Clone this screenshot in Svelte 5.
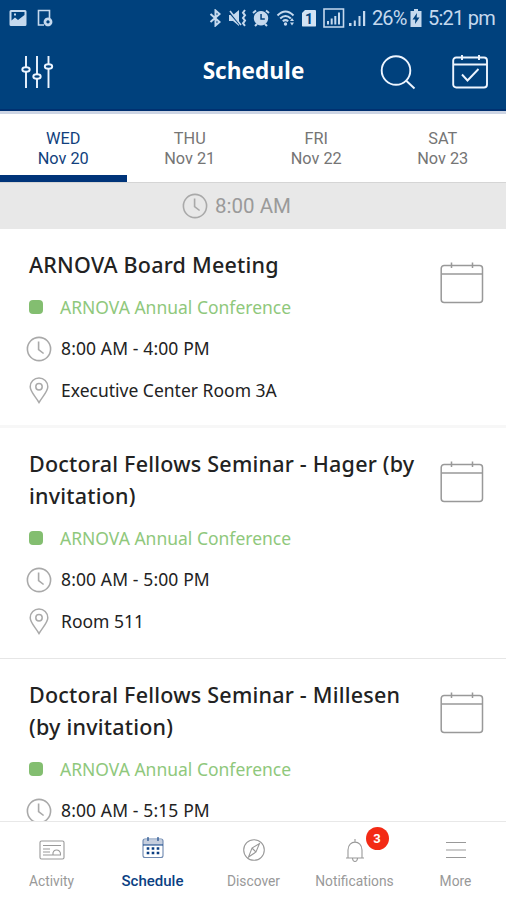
<script lang="ts">
  type Session = {
    title: string
    track: string
    time: string
    room?: string
  }

  const days = [
    { name: 'WED', date: 'Nov 20' },
    { name: 'THU', date: 'Nov 21' },
    { name: 'FRI', date: 'Nov 22' },
    { name: 'SAT', date: 'Nov 23' },
  ]

  const sessions: Session[] = [
    {
      title: 'ARNOVA Board Meeting',
      track: 'ARNOVA Annual Conference',
      time: '8:00 AM - 4:00 PM',
      room: 'Executive Center Room 3A',
    },
    {
      title: 'Doctoral Fellows Seminar - Hager (by invitation)',
      track: 'ARNOVA Annual Conference',
      time: '8:00 AM - 5:00 PM',
      room: 'Room 511',
    },
    {
      title: 'Doctoral Fellows Seminar - Millesen (by invitation)',
      track: 'ARNOVA Annual Conference',
      time: '8:00 AM - 5:15 PM',
    },
  ]

  const navItems = [
    { id: 'activity', label: 'Activity' },
    { id: 'schedule', label: 'Schedule' },
    { id: 'discover', label: 'Discover' },
    { id: 'notifications', label: 'Notifications', badge: 3 },
    { id: 'more', label: 'More' },
  ]

  let activeDay = $state(0)
  let activeNav = $state('schedule')
</script>

{#snippet clock()}
  <svg class="clock" viewBox="0 0 26 26" aria-hidden="true">
    <circle cx="13" cy="13" r="11.6" />
    <path d="M12.6 5.5v8l5 4" />
  </svg>
{/snippet}

<div class="screen">
  <div class="status">
    <div class="status-left">
      <svg width="18" height="18" viewBox="0 0 18 18">
        <path fill-rule="evenodd" d="M2 1h14a1.5 1.5 0 0 1 1.5 1.5v13a1.5 1.5 0 0 1-1.5 1.5H2a1.5 1.5 0 0 1-1.5-1.5v-13A1.5 1.5 0 0 1 2 1zM2.5 3v8.5l3.5-3 3 2.5 6.5-5V3zM5 4.5h2v2H5z" />
      </svg>
      <svg width="18" height="18" viewBox="0 0 18 18">
        <path class="line" d="M8 16H2.5V1.5h11V9" />
        <path fill-rule="evenodd" d="M12 8.5a4.4 4.4 0 1 0 .01 0zM12 11.3a1.6 1.6 0 1 1-.01 0z" />
      </svg>
    </div>
    <div class="status-right">
      <svg width="13" height="18" viewBox="0 0 13 18">
        <path class="line thick" d="M1.5 5l9 8-4 3.5v-15l4 3.5-9 8" />
      </svg>
      <svg class="mute" width="20" height="18" viewBox="0 0 20 18">
        <path d="M1 6h4l6-5v16l-6-5H1z" />
        <path class="line thick" d="M17 1l-2 2.7 2 2.6-2 2.7 2 2.6-2 2.7 2 2.5" />
        <path class="line cut" d="M1 3l12 14" />
        <path class="line" d="M2 2l11 14" />
      </svg>
      <svg class="alarm" width="18" height="18" viewBox="0 0 18 18">
        <path fill-rule="evenodd" d="M9 2a7.2 7.2 0 1 0 .01 0zM8.3 5h1.5v4.3h3v1.5H8.3z" />
        <path class="line thick" d="M1 4l3-2.5M17 4l-3-2.5M3 17l2-2M15 17l-2-2" />
      </svg>
      <svg class="wifi" width="21" height="18" viewBox="0 0 21 18">
        <path class="line thick" d="M1.5 6.5q8-8 16 0M4.2 9.5q5.3-5 10.6 0M6.8 12.3q2.7-2.3 5.4 0" />
        <circle cx="9.5" cy="15" r="1.7" />
        <path d="M14 12l2-3 2 3zM14 13.5h4l-2 3z" />
      </svg>
      <span class="sim">1</span>
      <svg class="signal" width="22" height="20" viewBox="0 0 22 20">
        <path class="line" d="M1 1h19.5v18H1z" />
        <path d="M4 13h2v3.5H4zM7.7 10.5h2v6h-2zM11.3 8h2v8.5h-2zM15 4.5h2v12h-2z" />
      </svg>
      <svg class="signal2" width="17" height="18" viewBox="0 0 17 18">
        <path d="M0 14h2.5v3H0zM4.8 11.5h2v5.5h-2zM9.5 7h2v10h-2zM14 2h2.2v15H14z" />
      </svg>
      <span class="percent">26%</span>
      <svg class="battery" width="12" height="18" viewBox="0 0 12 18">
        <path fill-rule="evenodd" d="M4 0h4v2h3.5v16H.5V2H4zM7 4L2.5 10.5h2.8L5 15l4.5-6.5H6.7z" />
      </svg>
      <span class="now">5:21 pm</span>
    </div>
  </div>

  <header class="topbar">
    <button type="button" class="tool filter" aria-label="Filter">
      <svg width="34" height="36" viewBox="0 0 34 36">
        <path d="M6 2v11M6 18v16M17 2v18M17 25v9M28.5 2v8M28.5 15v19" />
        <ellipse cx="6" cy="15.5" rx="3.7" ry="2.3" />
        <ellipse cx="17" cy="22.5" rx="3.7" ry="2.3" />
        <ellipse cx="28.5" cy="12.5" rx="3.7" ry="2.3" />
      </svg>
    </button>
    <h1>Schedule</h1>
    <div class="tools">
      <button type="button" class="tool" aria-label="Search">
        <svg width="36" height="36" viewBox="0 0 36 36">
          <circle cx="16" cy="16.5" r="14.3" />
          <path d="M26 26.5L34.5 34.5" />
        </svg>
      </button>
      <button type="button" class="tool" aria-label="My schedule">
        <svg width="38" height="36" viewBox="0 0 38 36">
          <rect x="2.2" y="3.5" width="33.8" height="30" rx="3" />
          <path d="M2.2 10.5H36M11 1v5M28 1v5M11 20.5l5.5 6L27.5 15" />
        </svg>
      </button>
    </div>
  </header>

  <div class="days">
    {#each days as day, index}
      <button type="button" class="day" class:active={index === activeDay} onclick={() => (activeDay = index)}>
        <span>{day.name}</span>
        <span>{day.date}</span>
      </button>
    {/each}
  </div>

  <div class="slot">
    {@render clock()}
    <span>8:00 AM</span>
  </div>

  <main class="sessions">
    {#each sessions as session}
      <article class="session">
        <div class="session-body">
          <h2>{session.title}</h2>
          <div class="row track">
            <span class="icon"><span class="swatch"></span></span>
            <span>{session.track}</span>
          </div>
          <div class="row">
            <span class="icon">{@render clock()}</span>
            <span class="time">{session.time}</span>
          </div>
          {#if session.room}
            <div class="row">
              <span class="icon">
                <svg class="pin" viewBox="0 0 20 27" aria-hidden="true">
                  <path d="M10 25.5C6 19 1.2 14.5 1.2 9.8a8.8 8.8 0 0 1 17.6 0C18.8 14.5 14 19 10 25.5z" />
                  <circle cx="10" cy="9.7" r="3.2" />
                </svg>
              </span>
              <span>{session.room}</span>
            </div>
          {/if}
        </div>
        <svg class="add" viewBox="0 0 44 42" aria-hidden="true">
          <rect x="1.2" y="3.5" width="41.3" height="37" rx="3" />
          <path d="M1.2 12h41.3M11.5 .5v5.5M32.5 .5v5.5" />
        </svg>
      </article>
    {/each}
  </main>

  <nav class="bottom">
    {#each navItems as item}
      <button
        type="button"
        class="nav-item"
        class:active={item.id === activeNav}
        onclick={() => (activeNav = item.id)}
      >
        <span class="nav-icon">
          {#if item.id === 'activity'}
            <svg width="26" height="26" viewBox="0 0 26 26">
              <rect x="1" y="4" width="24" height="18" rx="1.5" />
              <path d="M4 8.5h18M4 12h7M4 15h7M4 18h18M14 17.5c-1-6 8-6 7.5 0" />
            </svg>
          {:else if item.id === 'schedule'}
            <svg width="24" height="24" viewBox="0 0 24 24">
              <path class="tint" d="M2 4h20v5H2z" />
              <rect class="frame" x="2" y="3" width="20" height="18.5" rx="2" />
              <path d="M2 9h20M7 1v4M17 1v4" />
              <path class="dots" d="M5.7 12.5h2.6M10.7 12.5h2.6M15.7 12.5h2.6M5.7 17h2.6M10.7 17h2.6M15.7 17h2.6" />
            </svg>
          {:else if item.id === 'discover'}
            <svg width="24" height="24" viewBox="0 0 24 24">
              <circle cx="12" cy="12" r="10.3" />
              <path d="M17.5 5.5L14 14l-7.5 5L10 10zM10 10l4 4" />
            </svg>
          {:else if item.id === 'notifications'}
            <svg width="24" height="26" viewBox="0 0 24 26">
              <path d="M12 2v3M3 21h18M5 21V13c0-10.500 14-10.500 14 0v8M9.500 21.500c.5 4 4.500 4 5 0" />
            </svg>
          {:else}
            <svg width="22" height="20" viewBox="0 0 22 20">
              <path d="M1 2.5h20M1 10h20M1 17.5h20" />
            </svg>
          {/if}
          {#if item.badge}
            <span class="badge">{item.badge}</span>
          {/if}
        </span>
        <span class="nav-label">{item.label}</span>
      </button>
    {/each}
  </nav>
</div>

<style>
  :global(body) {
    background: #fff;
  }

  button {
    padding: 0;
    border: 0;
    background: none;
    font: inherit;
    color: inherit;
  }

  svg {
    display: block;
    flex: none;
  }

  .screen {
    display: flex;
    flex-direction: column;
    height: 900px;
    overflow: hidden;
    font-family: Roboto, sans-serif;
    background: #fff;
  }

  .status {
    display: flex;
    flex: none;
    justify-content: space-between;
    align-items: center;
    height: 36px;
    box-sizing: border-box;
    padding: 0 11px 0 9px;
    background: #00417d;
    color: #c5d9ee;
    fill: #c5d9ee;
  }

  .status-left,
  .status-right {
    display: flex;
    align-items: center;
  }

  .status-left {
    gap: 9px;
  }

  .status .line {
    fill: none;
    stroke: #c5d9ee;
    stroke-width: 1.6;
  }

  .status .thick {
    stroke-width: 2;
  }

  .status .cut {
    stroke: #00417d;
  }

  .mute {
    margin-left: 6px;
  }

  .alarm {
    margin-left: 4px;
  }

  .wifi {
    margin-left: 6px;
  }

  .sim {
    width: 14px;
    height: 17px;
    margin-left: 5px;
    border-radius: 1px;
    clip-path: polygon(25% 0, 100% 0, 100% 100%, 0 100%, 0 20%);
    background: #d3e3f4;
    color: #00417d;
    font-size: 14px;
    font-weight: 700;
    line-height: 18px;
    text-align: center;
  }

  .signal {
    margin-left: 7px;
  }

  .signal2 {
    margin-left: 4px;
  }

  .percent,
  .now {
    font-size: 20px;
    line-height: 36px;
    white-space: nowrap;
  }

  .percent {
    width: 33px;
    margin-left: 6px;
    letter-spacing: -0.9px;
  }

  .battery {
    margin-left: 5px;
  }

  .now {
    width: 67px;
    margin-left: 6px;
    letter-spacing: -0.75px;
  }

  .topbar {
    display: grid;
    flex: none;
    grid-template-columns: 1fr auto 1fr;
    align-items: center;
    height: 78px;
    box-sizing: border-box;
    padding: 0 17px 3px 20px;
    border-bottom: 3px solid #cdd5e4;
    background: #00417d;
    box-shadow: inset 0 -2px #003070;
    color: #fff;
  }

  .topbar h1 {
    margin: 0 2px 3px 0;
    font: 700 22.6px/30px 'Open Sans', sans-serif;
  }

  .tools {
    display: flex;
    justify-content: flex-end;
    gap: 35px;
  }

  .tool svg {
    fill: none;
    stroke: #edf5ff;
    stroke-width: 1.9;
  }

  .filter {
    justify-self: start;
  }

  .days {
    display: grid;
    flex: none;
    grid-template-columns: repeat(4, 1fr);
    height: 68px;
  }

  .day {
    display: flex;
    flex-direction: column;
    align-items: center;
    box-sizing: border-box;
    padding-top: 15px;
    border-bottom: 7px solid transparent;
    color: #757575;
    font-size: 16.3px;
    line-height: 20px;
  }

  .day.active {
    border-color: #003479;
    color: #113f7d;
  }

  .slot {
    display: flex;
    flex: none;
    justify-content: center;
    align-items: center;
    gap: 7px;
    height: 47px;
    box-sizing: border-box;
    padding-right: 33px;
    border-top: 1px solid #d5d5d5;
    background: #e8e8e8;
    color: #9a9a9a;
    font-size: 20.5px;
  }

  .clock {
    width: 26px;
    height: 26px;
    fill: none;
    stroke: #a9a9a9;
    stroke-width: 1.6;
  }

  .sessions {
    flex: 1;
    min-height: 0;
    overflow: hidden;
  }

  .session {
    display: flex;
    justify-content: space-between;
    align-items: flex-start;
    padding: 20px 22px 16px 29px;
    border-bottom: 1px solid #e6e6e6;
  }

  .session:first-child {
    padding-bottom: 14px;
    border-bottom: 3px solid #f7f7f7;
  }

  .session-body {
    width: 395px;
  }

  .session h2 {
    margin: 0 0 5.5px;
    color: #222;
    font: 500 21.5px/32px 'Noto Sans', 'Open Sans', sans-serif;
    letter-spacing: 0.22px;
  }

  .row {
    display: flex;
    align-items: center;
    height: 41.5px;
    color: #222;
    font: 400 17.5px/20px 'Noto Sans', 'Open Sans', sans-serif;
  }

  .icon {
    display: flex;
    justify-content: center;
    width: 26px;
    margin-right: 9px;
    margin-left: -3px;
  }

  .time {
    margin-top: -2px;
    letter-spacing: 0.12px;
  }

  .track {
    color: #8fc87c;
    font-size: 17.5px;
  }

  .track .icon {
    width: 14px;
    margin-right: 17px;
    margin-left: 0;
  }

  .swatch {
    width: 14px;
    height: 14px;
    border-radius: 4px;
    background: #83be70;
  }

  .pin {
    width: 20px;
    height: 27px;
    fill: none;
    stroke: #aaa;
    stroke-width: 1.5;
  }

  .add {
    width: 44px;
    height: 42px;
    margin-top: 13px;
    fill: none;
    stroke: #999;
    stroke-width: 1.5;
  }

  .bottom {
    display: grid;
    flex: none;
    grid-template-columns: repeat(5, 1fr);
    height: 79px;
    box-sizing: border-box;
    padding-left: 1px;
    border-top: 1px solid #e8e8e8;
    background: #fff;
  }

  .nav-item {
    display: flex;
    flex-direction: column;
    align-items: center;
    padding-top: 14px;
    color: #999;
    font-size: 13.8px;
    line-height: 18px;
  }

  .nav-icon {
    position: relative;
    display: flex;
    align-items: center;
    height: 28px;
    margin-bottom: 8px;
  }

  .nav-icon svg {
    fill: none;
    stroke: currentColor;
    stroke-width: 1.1;
  }

  .nav-item.active {
    color: #0b3f83;
    font-size: 15px;
    font-weight: 500;
  }

  .active .nav-icon {
    top: -2px;
  }

  .nav-icon .tint {
    fill: #c5cede;
    stroke: none;
  }

  .nav-icon .frame {
    stroke: #6d88b0;
  }

  .nav-icon .dots {
    stroke-width: 2.6;
  }

  .badge {
    position: absolute;
    top: -9px;
    left: 23px;
    width: 23px;
    height: 23px;
    border-radius: 50%;
    background: #f32a15;
    color: #fff;
    font-size: 13px;
    font-weight: 700;
    line-height: 23px;
    text-align: center;
  }
</style>
